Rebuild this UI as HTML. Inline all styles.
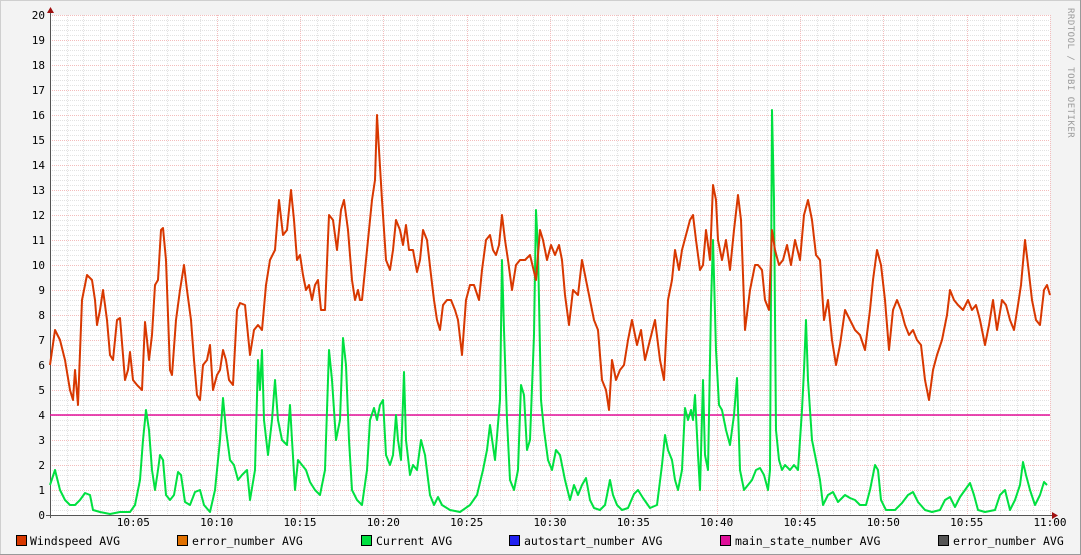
<!DOCTYPE html>
<html><head><meta charset="utf-8"><style>
html,body{margin:0;padding:0;background:#f3f3f3;}
svg{display:block;}
text{font-family:"DejaVu Sans Mono","Liberation Mono",monospace;}
</style></head><body>
<svg width="1081" height="555" viewBox="0 0 1081 555" xmlns="http://www.w3.org/2000/svg">
<rect x="0" y="0" width="1081" height="555" fill="#f3f3f3"/>
<rect x="0.5" y="0.5" width="1080" height="554" fill="none" stroke="#cfcfcf"/>
<line x1="0" y1="554.5" x2="1081" y2="554.5" stroke="#9a9a9a"/>
<line x1="1080.5" y1="0" x2="1080.5" y2="555" stroke="#9a9a9a"/>
<rect x="50" y="15" width="1000" height="500" fill="#ffffff"/>
<g stroke-width="1" fill="none">
<g stroke="#e2e2e2" stroke-dasharray="1,1" id="minor"></g>
<g stroke="#f3bcbc" stroke-dasharray="1,1" id="major"></g>
</g>
<g id="labels" font-size="11" fill="#000"></g>
<line x1="50.5" y1="10" x2="50.5" y2="518" stroke="#555"/>
<line x1="46" y1="515.5" x2="1054" y2="515.5" stroke="#555"/>
<polygon points="47,13 54,13 50.5,7" fill="#a01010"/>
<polygon points="1052,512 1052,519 1058,515.5" fill="#a01010"/>
<line x1="50" y1="415" x2="1050" y2="415" stroke="#e0109a" stroke-width="1.6"/>
<polyline fill="none" stroke="#00e040" stroke-width="2" stroke-linejoin="round" points="50,485 55,470 60,490 65,500 70,505 75,505 80,500 85,493 90,495 93,510 100,512 110,514 120,512 130,512 135,505 140,480 143,440 146,410 149,430 152,470 155,490 158,470 160,455 163,460 166,495 170,500 174,495 178,472 181,475 185,502 190,505 195,492 200,490 204,505 210,512 215,490 220,440 223,398 226,430 230,460 234,465 238,480 242,475 247,470 250,500 255,470 258,360 260,390 262,350 264,420 268,455 272,420 275,380 278,420 282,440 287,445 290,405 292,440 295,490 298,460 302,465 306,470 310,482 315,490 320,495 325,470 329,350 332,380 336,440 340,420 343,338 346,365 349,440 352,490 357,500 362,505 367,470 370,420 374,408 377,420 380,405 383,400 386,455 390,465 393,455 396,415 398,440 401,460 404,372 406,440 410,475 413,465 417,470 421,440 425,455 430,495 434,505 438,497 442,505 450,510 460,512 470,505 477,495 483,470 487,450 490,425 495,460 500,400 502,260 504,330 507,420 510,480 514,490 518,470 521,385 524,395 527,450 530,440 534,335 536,210 538,250 541,400 544,430 548,460 552,470 556,450 560,455 565,480 570,500 574,485 578,495 582,485 586,478 590,500 594,508 600,510 605,505 610,480 613,495 617,505 622,510 628,508 634,494 638,490 643,498 650,508 657,505 662,465 665,435 668,450 672,460 675,480 678,490 682,470 685,408 688,420 691,410 693,420 695,395 698,455 700,490 703,380 705,455 708,470 711,305 713,240 716,350 719,405 722,410 726,430 730,445 734,415 737,378 740,470 744,490 748,485 752,480 756,470 760,468 764,475 768,490 770,470 772,110 774,200 776,430 779,460 782,470 785,465 790,470 794,465 798,470 802,410 804,370 806,320 808,380 812,440 816,460 820,480 823,505 828,495 833,492 838,502 845,495 850,498 855,500 860,505 866,505 870,490 875,465 878,470 881,500 886,510 895,510 902,503 908,495 913,492 918,502 925,510 932,512 940,510 945,500 950,497 955,507 960,497 965,490 970,483 974,495 978,510 985,512 995,510 1000,495 1005,490 1010,510 1015,500 1020,485 1023,462 1026,475 1030,490 1035,505 1040,495 1044,482 1047,485"/>
<polyline fill="none" stroke="#d83800" stroke-width="2" stroke-linejoin="round" points="50,365 55,330 60,340 65,360 70,390 73,400 75,370 78,405 82,300 87,275 92,280 95,300 97,325 100,310 103,290 107,320 110,355 113,360 117,320 120,318 123,355 125,380 128,370 130,352 133,380 137,385 142,390 145,322 147,340 149,360 152,335 155,285 158,280 161,230 163,228 166,260 170,370 172,375 176,320 180,290 184,265 187,290 191,320 194,360 197,395 200,400 203,365 207,360 210,345 213,390 217,375 220,370 223,350 226,360 229,380 233,385 237,310 240,303 245,305 250,355 254,330 258,325 262,330 266,285 270,260 275,250 279,200 283,235 287,230 291,190 294,220 297,260 300,255 303,275 306,290 309,285 312,300 315,285 318,280 321,310 325,310 329,215 333,220 337,250 341,210 344,200 348,230 352,280 355,300 358,290 360,300 362,300 367,250 372,200 375,180 377,115 379,150 382,200 386,260 390,270 393,250 396,220 400,230 403,245 406,225 409,250 413,250 417,272 420,260 423,230 427,240 431,275 434,300 437,320 440,330 443,305 447,300 451,300 455,310 458,320 462,355 466,300 470,285 474,285 479,300 482,270 486,240 490,235 493,250 496,255 499,245 502,215 505,240 508,260 512,290 516,265 520,260 525,260 530,255 536,280 540,230 543,240 547,260 551,245 555,255 559,245 562,260 565,295 569,325 573,290 578,295 582,260 586,280 590,300 594,320 598,330 602,380 606,390 609,410 612,360 616,380 620,370 624,365 628,340 632,320 637,345 641,330 645,360 650,340 655,320 660,360 664,380 668,300 672,280 675,250 679,270 682,250 686,235 690,220 693,215 696,240 700,270 703,265 706,230 710,260 713,185 716,200 718,240 722,260 726,240 730,270 734,230 738,195 741,220 745,330 750,290 755,265 758,265 762,270 765,300 769,310 772,230 775,250 779,265 783,260 787,245 791,265 795,240 800,260 804,215 808,200 812,220 816,255 820,260 824,320 828,300 832,340 836,365 840,345 845,310 850,320 855,330 860,335 865,350 870,310 873,280 877,250 881,265 885,300 889,350 893,310 897,300 901,310 905,325 909,335 913,330 917,340 921,345 925,380 929,400 933,370 937,355 942,340 947,315 950,290 954,300 958,305 963,310 968,300 972,310 976,305 980,320 985,345 989,325 993,300 997,330 1002,300 1006,305 1010,320 1014,330 1018,305 1021,285 1025,240 1028,265 1032,300 1036,320 1040,325 1044,290 1047,285 1050,295"/>
<text x="1068" y="8" font-size="9" fill="#9a9a9a" transform="rotate(90 1068 8)" letter-spacing="0.5">RRDTOOL / TOBI OETIKER</text>
<g font-size="11.5" fill="#000">
<rect x="16.5" y="535.5" width="10" height="10" fill="#d83800" stroke="#000"/><text x="30" y="545">Windspeed AVG</text>
<rect x="177.5" y="535.5" width="10" height="10" fill="#e07000" stroke="#000"/><text x="192" y="545">error_number AVG</text>
<rect x="361.5" y="535.5" width="10" height="10" fill="#00e040" stroke="#000"/><text x="376" y="545">Current AVG</text>
<rect x="509.5" y="535.5" width="10" height="10" fill="#2020f0" stroke="#000"/><text x="524" y="545">autostart_number AVG</text>
<rect x="720.5" y="535.5" width="10" height="10" fill="#e0109a" stroke="#000"/><text x="735" y="545">main_state_number AVG</text>
<rect x="938.5" y="535.5" width="10" height="10" fill="#555555" stroke="#000"/><text x="953" y="545">error_number AVG</text>
</g>
</svg>
<script>
(function(){
var ns="http://www.w3.org/2000/svg";
var mi=document.getElementById("minor"),ma=document.getElementById("major"),lb=document.getElementById("labels");
function ln(g,x1,y1,x2,y2){var l=document.createElementNS(ns,"line");l.setAttribute("x1",x1);l.setAttribute("y1",y1);l.setAttribute("x2",x2);l.setAttribute("y2",y2);g.appendChild(l);}
function tx(x,y,s,a){var t=document.createElementNS(ns,"text");t.setAttribute("x",x);t.setAttribute("y",y);t.setAttribute("text-anchor",a);t.textContent=s;lb.appendChild(t);}
for(var i=1;i<=100;i++){var y=515-i*5+0.5;if(i%5==0){ln(ma,50,y,1050,y);}else ln(mi,50,y,1050,y);}
for(var m=1;m<=60;m++){var x=Math.round(50+m*1000/60)+0.5;if(m%5==0)ln(ma,x,15,x,515);else ln(mi,x,15,x,515);}
for(var v=0;v<=20;v++)tx(45,515-v*25+4,String(v),"end");
for(var k=1;k<=12;k++){var mm=k*5,h=10+Math.floor(mm/60),mn=mm%60;tx(50+k*1000/12,526,h+":"+(mn<10?"0":"")+mn,"middle");}
})();
</script>
</body></html>
